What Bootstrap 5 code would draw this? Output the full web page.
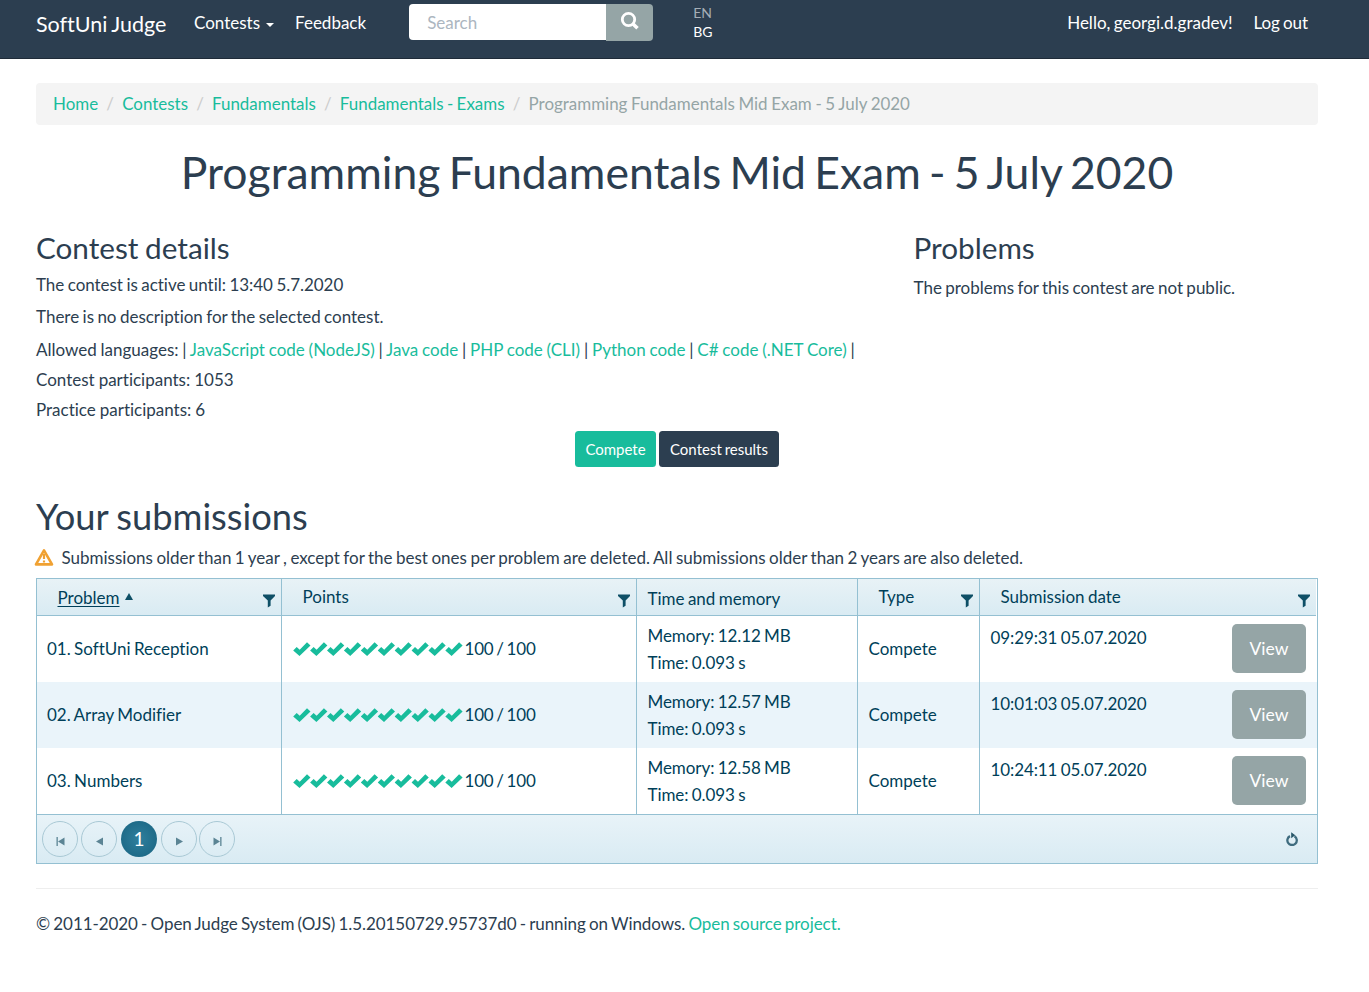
<!DOCTYPE html>
<html lang="en">
<head>
<meta charset="utf-8">
<meta name="viewport" content="width=device-width, initial-scale=1">
<title>SoftUni Judge</title>
<link href="https://cdn.jsdelivr.net/npm/bootstrap@5.3.0/dist/css/bootstrap.min.css" rel="stylesheet">
<style>
body{font-family:Lato,"Liberation Sans",sans-serif;font-size:17px;line-height:24px;word-spacing:-.057em;font-variant-ligatures:none;color:#2c3e50;background:#fff}
a{color:#18bc9c;text-decoration:none}
h1,h2,h3{font-weight:400;margin:0}
.topbar{height:59px;background:#2c3e50;border-bottom:1px solid #1f2b38;padding:0 61px 0 36px}
.topbar a{color:#fff;line-height:24px;padding-top:11px;white-space:nowrap}
.topbar .site-name{font-size:21.5px;padding-top:12px;width:158px}
.topbar .caret{display:inline-block;border:4px solid transparent;border-top-color:#fff;border-bottom:0;margin-left:6px;vertical-align:2px}
.topbar .feedback{margin-left:21px}
.topbar .logout{margin-left:21px;letter-spacing:-.1px}
.search-box{width:244px;margin:4px 0 0 43px}
.search-box .form-control{height:36px;border:0;border-radius:4px 0 0 4px;padding:0 18px;font-size:17px}
.search-box .form-control::placeholder{color:#acb6c0}
.search-box .btn{flex:none;width:47px;height:37px;background:#95a5a6;border:0;border-radius:0 4px 4px 0;padding:0 0 3px 1px;line-height:1}
.lang{font-size:14px;line-height:19px;margin:3px 0 0 40px}
.topbar .lang a{display:block;padding:0;line-height:19px}
.topbar .lang .off{color:#a5aeb7}
.page{padding:24px 51px 0 36px}
.breadcrumb{background:#f4f4f4;border-radius:4px;height:42px;padding:0 17px;margin:0;font-size:16.95px;--bs-breadcrumb-item-padding-x:8.200px;--bs-breadcrumb-divider-color:#ccc}
.breadcrumb-item.active{color:#95a5a6;word-spacing:-.7px}
h1{font-size:44.500px;line-height:48px;margin-top:23px;word-spacing:-3.200px}
h2{font-size:36.300px;line-height:40px;margin-top:29px}
h3{font-size:29.700px;line-height:32px}
.details{margin-top:36px}
.details p{margin:0;white-space:nowrap}
.details-main{width:877.5px}
.details .until{margin-top:9px;word-spacing:-.800px;letter-spacing:-.04px}
.details .about{margin-top:8px}
.details .langs{margin-top:9px;word-spacing:-.570px}
.details .count{margin-top:6px;word-spacing:-.4px}
.details .hidden-note{margin-top:12px}
.acts{height:36px;margin-top:9px;gap:3px}
.acts .btn{border:0;border-radius:3.500px;font-size:15px;height:36px;line-height:36px;padding:0;color:#fff}
.acts .go{background:#18bc9c;width:81px}
.acts .results{background:#2c3e50;width:120px}
.warn{margin:10px 0 0 -2px;word-spacing:-.860px}
.warn svg{margin:2px 7.500px 0 0}
.judge-grid{border:1px solid #94c0d2;color:#003f59;margin-top:8px;height:286px}
.cols{display:grid;grid-template-columns:244px 355px 221px 122px 1fr}
.cols>div{border-left:1px solid #94c0d2;padding:0 10px 0 10.500px;white-space:nowrap}
.cols>div:first-child{border-left:0;padding-left:10px}
.heads{height:37px;margin-right:1px;background:linear-gradient(#e8f2f6,#d9ebf3);border-bottom:1px solid #94c0d2}
.heads>div,.heads>div:first-child{display:flex;justify-content:space-between;padding:6px 6px 0 20.500px}
.heads>div:first-child{padding-top:7px}
.heads>.plain{padding:8px 0 0 10.500px}
.heads .fun{margin-top:9px}
.heads>div:first-child .fun{margin-top:8px}
.sort{display:inline-block;border:4px solid transparent;border-bottom:7px solid #0e4f66;border-top:0;margin-left:5px;vertical-align:4px}
.heads u{text-underline-offset:2px}
.line{height:66px}
.line.alt{background:#eaf4fa}
.mid{display:flex;align-items:center}
.score{letter-spacing:-.180px;word-spacing:-1.400px}
.ticks{margin:0 2px 0 0}
.memo{line-height:27px;padding-top:6px!important;letter-spacing:-.07px}
.when{padding:8px 11px 0 10.500px!important}
.when span{line-height:28px;letter-spacing:-.1px}
.when .btn{width:74px;height:49px;line-height:49px;background:#95a5a6;border:0;border-radius:5px;color:#fff;font-size:17.500px;padding:0}
.pagerbar{height:49px;border-top:1px solid #94c0d2;background:linear-gradient(#e8f3f8,#d9ebf3);padding:0 19px 0 5px}
.rnd{width:36px;height:36px;border:1px solid #a9c9d5;border-radius:50%;margin-right:3px;display:flex;align-items:center;justify-content:center}
.rnd.next{margin-right:2px}
.rnd svg{margin-top:4px}
.rnd.now{background:radial-gradient(circle,#2f7f9d,#186380);border:0;color:#fff;margin:0 4px 0 1px;font-size:19px}
.foot{border-top:1px solid #eee;margin-top:24px;padding-top:23px;word-spacing:-1.050px;letter-spacing:-.07px}
</style>
</head>
<body>
<svg class="d-none">
<symbol id="funnel" viewBox="0 0 12 14"><path fill="#0e4f66" d="M0 .5h12V2L7.600 6.500v5.200L4.800 13.500v-7L0 2z"/></symbol>
<symbol id="tick" viewBox="0 0 18 14"><path fill="#18bc9c" d="M.2 8.500 3.700 5 6.700 7.700 14 .2 17.500 3.500 6.500 14z"/></symbol>
<symbol id="ticks" viewBox="0 0 170 14"><use href="#tick" width="18" height="14"/><use href="#tick" x="16.900" width="18" height="14"/><use href="#tick" x="33.800" width="18" height="14"/><use href="#tick" x="50.700" width="18" height="14"/><use href="#tick" x="67.600" width="18" height="14"/><use href="#tick" x="84.500" width="18" height="14"/><use href="#tick" x="101.400" width="18" height="14"/><use href="#tick" x="118.300" width="18" height="14"/><use href="#tick" x="135.200" width="18" height="14"/><use href="#tick" x="152.100" width="18" height="14"/></symbol>
</svg>
<nav class="topbar d-flex align-items-start">
<a class="site-name" href="#">SoftUni Judge</a>
<a href="#">Contests<span class="caret"></span></a>
<a class="feedback" href="#">Feedback</a>
<form class="search-box d-flex"><input class="form-control" placeholder="Search"><button class="btn" type="button" aria-label="Search"><svg width="20" height="20" viewBox="0 0 20 20" fill="none" stroke="#fff"><circle cx="8.500" cy="8.500" r="6.200" stroke-width="2.800"/><path d="m12.800 12.800 4.700 4.500" stroke-width="3.600"/></svg></button></form>
<div class="lang"><a class="off" href="#">EN</a><a href="#">BG</a></div>
<a class="ms-auto" href="#">Hello, georgi.d.gradev!</a>
<a class="logout" href="#">Log out</a>
</nav>
<main class="page">
<ol class="breadcrumb align-items-center">
<li class="breadcrumb-item"><a href="#">Home</a></li><li class="breadcrumb-item"><a href="#">Contests</a></li><li class="breadcrumb-item"><a href="#">Fundamentals</a></li><li class="breadcrumb-item"><a href="#">Fundamentals - Exams</a></li><li class="breadcrumb-item active">Programming Fundamentals Mid Exam - 5 July 2020</li>
</ol>
<h1 class="text-center">Programming Fundamentals Mid Exam - 5 July 2020</h1>
<section class="details d-flex">
<div class="details-main">
<h3>Contest details</h3>
<p class="until">The contest is active until: 13:40 5.7.2020</p>
<p class="about">There is no description for the selected contest.</p>
<p class="langs">Allowed languages: | <a href="#">JavaScript code (NodeJS)</a> | <a href="#">Java code</a> | <a href="#">PHP code (CLI)</a> | <a href="#">Python code</a> | <a href="#">C# code (.NET Core)</a> |</p>
<p class="count">Contest participants: 1053</p>
<p class="count">Practice participants: 6</p>
</div>
<div><h3>Problems</h3><p class="hidden-note">The problems for this contest are not public.</p></div>
</section>
<div class="acts d-flex justify-content-center"><a class="btn go" href="#">Compete</a><a class="btn results" href="#">Contest results</a></div>
<h2>Your submissions</h2>
<p class="warn d-flex"><svg width="20" height="18" viewBox="0 0 20 18"><path d="M10 2.300 18 16.400H2z" fill="#fff" stroke="#f0a132" stroke-width="2.600" stroke-linejoin="round"/><path d="M10 6v5M10 12.500v2" stroke="#f0a132" stroke-width="2.200"/></svg>Submissions older than 1 year , except for the best ones per problem are deleted. All submissions older than 2 years are also deleted.</p>
<div class="judge-grid">
<div class="cols heads">
<div><span><u>Problem</u><i class="sort"></i></span><svg class="fun" width="12" height="14"><use href="#funnel"/></svg></div>
<div>Points<svg class="fun" width="12" height="14"><use href="#funnel"/></svg></div>
<div class="plain">Time and memory</div>
<div>Type<svg class="fun" width="12" height="14"><use href="#funnel"/></svg></div>
<div>Submission date<svg class="fun" width="12" height="14"><use href="#funnel"/></svg></div>
</div>
<div class="cols line"><div class="mid">01. SoftUni Reception</div><div class="mid score"><svg class="ticks" width="170" height="14"><use href="#ticks"/></svg>100 / 100</div><div class="memo">Memory: 12.12 MB<br>Time: 0.093 s</div><div class="mid">Compete</div><div class="when d-flex justify-content-between"><span>09:29:31 05.07.2020</span><a class="btn" href="#">View</a></div></div>
<div class="cols line alt"><div class="mid">02. Array Modifier</div><div class="mid score"><svg class="ticks" width="170" height="14"><use href="#ticks"/></svg>100 / 100</div><div class="memo">Memory: 12.57 MB<br>Time: 0.093 s</div><div class="mid">Compete</div><div class="when d-flex justify-content-between"><span>10:01:03 05.07.2020</span><a class="btn" href="#">View</a></div></div>
<div class="cols line"><div class="mid">03. Numbers</div><div class="mid score"><svg class="ticks" width="170" height="14"><use href="#ticks"/></svg>100 / 100</div><div class="memo">Memory: 12.58 MB<br>Time: 0.093 s</div><div class="mid">Compete</div><div class="when d-flex justify-content-between"><span>10:24:11 05.07.2020</span><a class="btn" href="#">View</a></div></div>
<div class="pagerbar d-flex align-items-center">
<a class="rnd" href="#" aria-label="First"><svg width="9" height="9" viewBox="0 0 9 9" fill="#5b8494"><path d="M.5 0h1.300v9H.5zM8.500.5v8L2 4.500z"/></svg></a>
<a class="rnd" href="#" aria-label="Previous"><svg width="9" height="9" viewBox="0 0 9 9" fill="#5b8494"><path d="M8 .5v8L1 4.500z"/></svg></a>
<span class="rnd now">1</span>
<a class="rnd next" href="#" aria-label="Next"><svg width="9" height="9" viewBox="0 0 9 9" fill="#5b8494"><path d="M1 .5v8l7-4z"/></svg></a>
<a class="rnd" href="#" aria-label="Last"><svg width="9" height="9" viewBox="0 0 9 9" fill="#5b8494"><path d="M7.200 0h1.300v9H7.200zM.5.5v8L7 4.500z"/></svg></a>
<svg class="ms-auto" width="12" height="14" viewBox="0 0 12 14"><path d="M8.500 4.300A4.700 4.700 0 1 1 4 4.100" fill="none" stroke="#3f6c7f" stroke-width="2.300"/><path d="M5.200.3 9.300 3.200 5.200 6.300z" fill="#275668"/></svg>
</div>
</div>
<footer class="foot">© 2011-2020 - Open Judge System (OJS) 1.5.20150729.95737d0 - running on Windows. <a href="#">Open source project.</a></footer>
</main>
<script src="https://cdn.jsdelivr.net/npm/bootstrap@5.3.0/dist/js/bootstrap.bundle.min.js"></script>
</body>
</html>
